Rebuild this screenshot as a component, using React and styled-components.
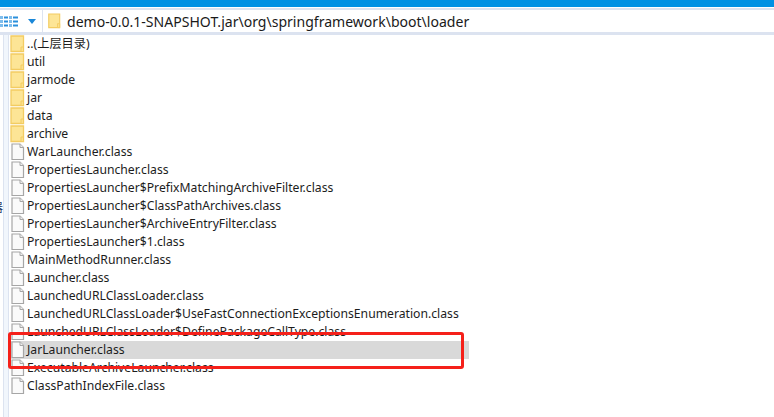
import React from 'react'
import styled, { createGlobalStyle } from 'styled-components'

const Global = createGlobalStyle`
  html, body { margin: 0; padding: 0; background: #fff; }
  body { width: 774px; height: 417px; overflow: hidden; font-family: "Noto Sans", "Open Sans", "Noto Sans CJK SC", sans-serif; }
`

const Page = styled.div`
  position: relative;
  width: 774px;
  height: 417px;
  overflow: hidden;
  display: flex;
  flex-direction: column;
`
const TitleStrip = styled.div`
  height: 7px;
  flex: none;
  background: #0091e3;
`
const Toolbar = styled.div`
  margin-top: 1px;
  height: 22px;
  flex: none;
  display: flex;
  align-items: center;
  border-top: 2px solid #dce3f0;
  border-bottom: 3px solid #dce3f0;
`
const ViewButton = styled.div`
  width: 42px;
  display: flex;
  align-items: center;
  gap: 10px;
  flex: none;
`
const AddressBar = styled.div`
  flex: 1;
  height: 100%;
  display: flex;
  align-items: center;
  gap: 6px;
  padding-left: 4px;
  border-left: 1px solid #dce3f0;
  font-size: 14.05px;
  color: #1a1a1a;
  white-space: nowrap;
`
const Body = styled.div`
  flex: 1;
  display: flex;
`
const Sidebar = styled.div`
  width: 3px;
  flex: none;
  background: #fff;
  overflow: hidden;
  font-size: 12px;
  color: #2a3a6a;
  padding-top: 163px;
  direction: rtl;
`
const Divider = styled.div`
  width: 6px;
  flex: none;
  background: #f1f6fc;
  border-left: 1px solid #dce3f0;
  border-right: 1px solid #dce3f0;
  box-sizing: border-box;
`
const List = styled.ul`
  list-style: none;
  margin: 0;
  padding: 0;
`
const Row = styled.li`
  width: 460px;
  height: 18px;
  display: flex;
  align-items: center;
  gap: 2px;
  font-size: 12.2px;
  line-height: 18px;
  color: #1c1c1c;
  white-space: nowrap;
  background: ${p => (p.$selected ? '#d9d9d9' : 'transparent')};
`
const Highlight = styled.div`
  position: absolute;
  left: 8px;
  top: 332px;
  width: 456px;
  height: 37px;
  box-sizing: border-box;
  border: 3px solid #f5201a;
  border-radius: 3px;
`

const Folder = ({ width = 16, height = 18 }) => (
  <svg width={width} height={height} viewBox="0 0 16 18" style={{ flex: 'none' }}>
    <path d="M2 1h12.5v15.5H2z" fill="#fde596" stroke="#f3cc62" strokeWidth="1.3" />
    <path d="M12 16.5v-4.5h2.5v4.5z" fill="#fbe08a" stroke="#f3cc62" />
  </svg>
)

const FileIcon = () => (
  <svg width="16" height="18" viewBox="0 0 16 18" style={{ flex: 'none' }}>
    <path d="M3 1h8l3.5 3.5v12H3z" fill="#fafafa" stroke="#a6a6a6" strokeWidth="1.2" />
    <path d="M11 1v3.5h3.5" fill="#eeeeee" stroke="#a6a6a6" />
  </svg>
)

const ViewIcon = () => (
  <svg width="18" height="11" viewBox="0 0 18 11">
    <g fill="#2a8fdc">
      {[0, 4, 8].map(y => (
        <g key={y}>
          <rect x="0" y={y} width="3" height="3" fill="#7fbdec" />
          <rect x="4" y={y + 0.5} width="4" height="2" />
          <rect x="9" y={y} width="3" height="3" fill="#7fbdec" />
          <rect x="13" y={y + 0.5} width="5" height="2" />
        </g>
      ))}
    </g>
  </svg>
)

const Caret = () => (
  <svg width="8" height="5" viewBox="0 0 8 5">
    <path d="M0 0h8L4 5z" fill="#1a87d8" />
  </svg>
)

const items = [
  ['folder', '..(上层目录)'],
  ['folder', 'util'],
  ['folder', 'jarmode'],
  ['folder', 'jar'],
  ['folder', 'data'],
  ['folder', 'archive'],
  ['file', 'WarLauncher.class'],
  ['file', 'PropertiesLauncher.class'],
  ['file', 'PropertiesLauncher$PrefixMatchingArchiveFilter.class'],
  ['file', 'PropertiesLauncher$ClassPathArchives.class'],
  ['file', 'PropertiesLauncher$ArchiveEntryFilter.class'],
  ['file', 'PropertiesLauncher$1.class'],
  ['file', 'MainMethodRunner.class'],
  ['file', 'Launcher.class'],
  ['file', 'LaunchedURLClassLoader.class'],
  ['file', 'LaunchedURLClassLoader$UseFastConnectionExceptionsEnumeration.class'],
  ['file', 'LaunchedURLClassLoader$DefinePackageCallType.class'],
  ['file', 'JarLauncher.class'],
  ['file', 'ExecutableArchiveLauncher.class'],
  ['file', 'ClassPathIndexFile.class'],
]

export default function App() {
  return (
    <Page>
      <Global />
      <TitleStrip />
      <Toolbar>
        <ViewButton>
          <ViewIcon />
          <Caret />
        </ViewButton>
        <AddressBar>
          <Folder width={14} height={18} />
          demo-0.0.1-SNAPSHOT.jar\org\springframework\boot\loader
        </AddressBar>
      </Toolbar>
      <Body>
        <Sidebar>器</Sidebar>
        <Divider />
        <List>
          {items.map(([type, name]) => (
            <Row key={name} $selected={name === 'JarLauncher.class'}>
              {type === 'folder' ? <Folder /> : <FileIcon />}
              {name}
            </Row>
          ))}
        </List>
      </Body>
      <Highlight />
    </Page>
  )
}
